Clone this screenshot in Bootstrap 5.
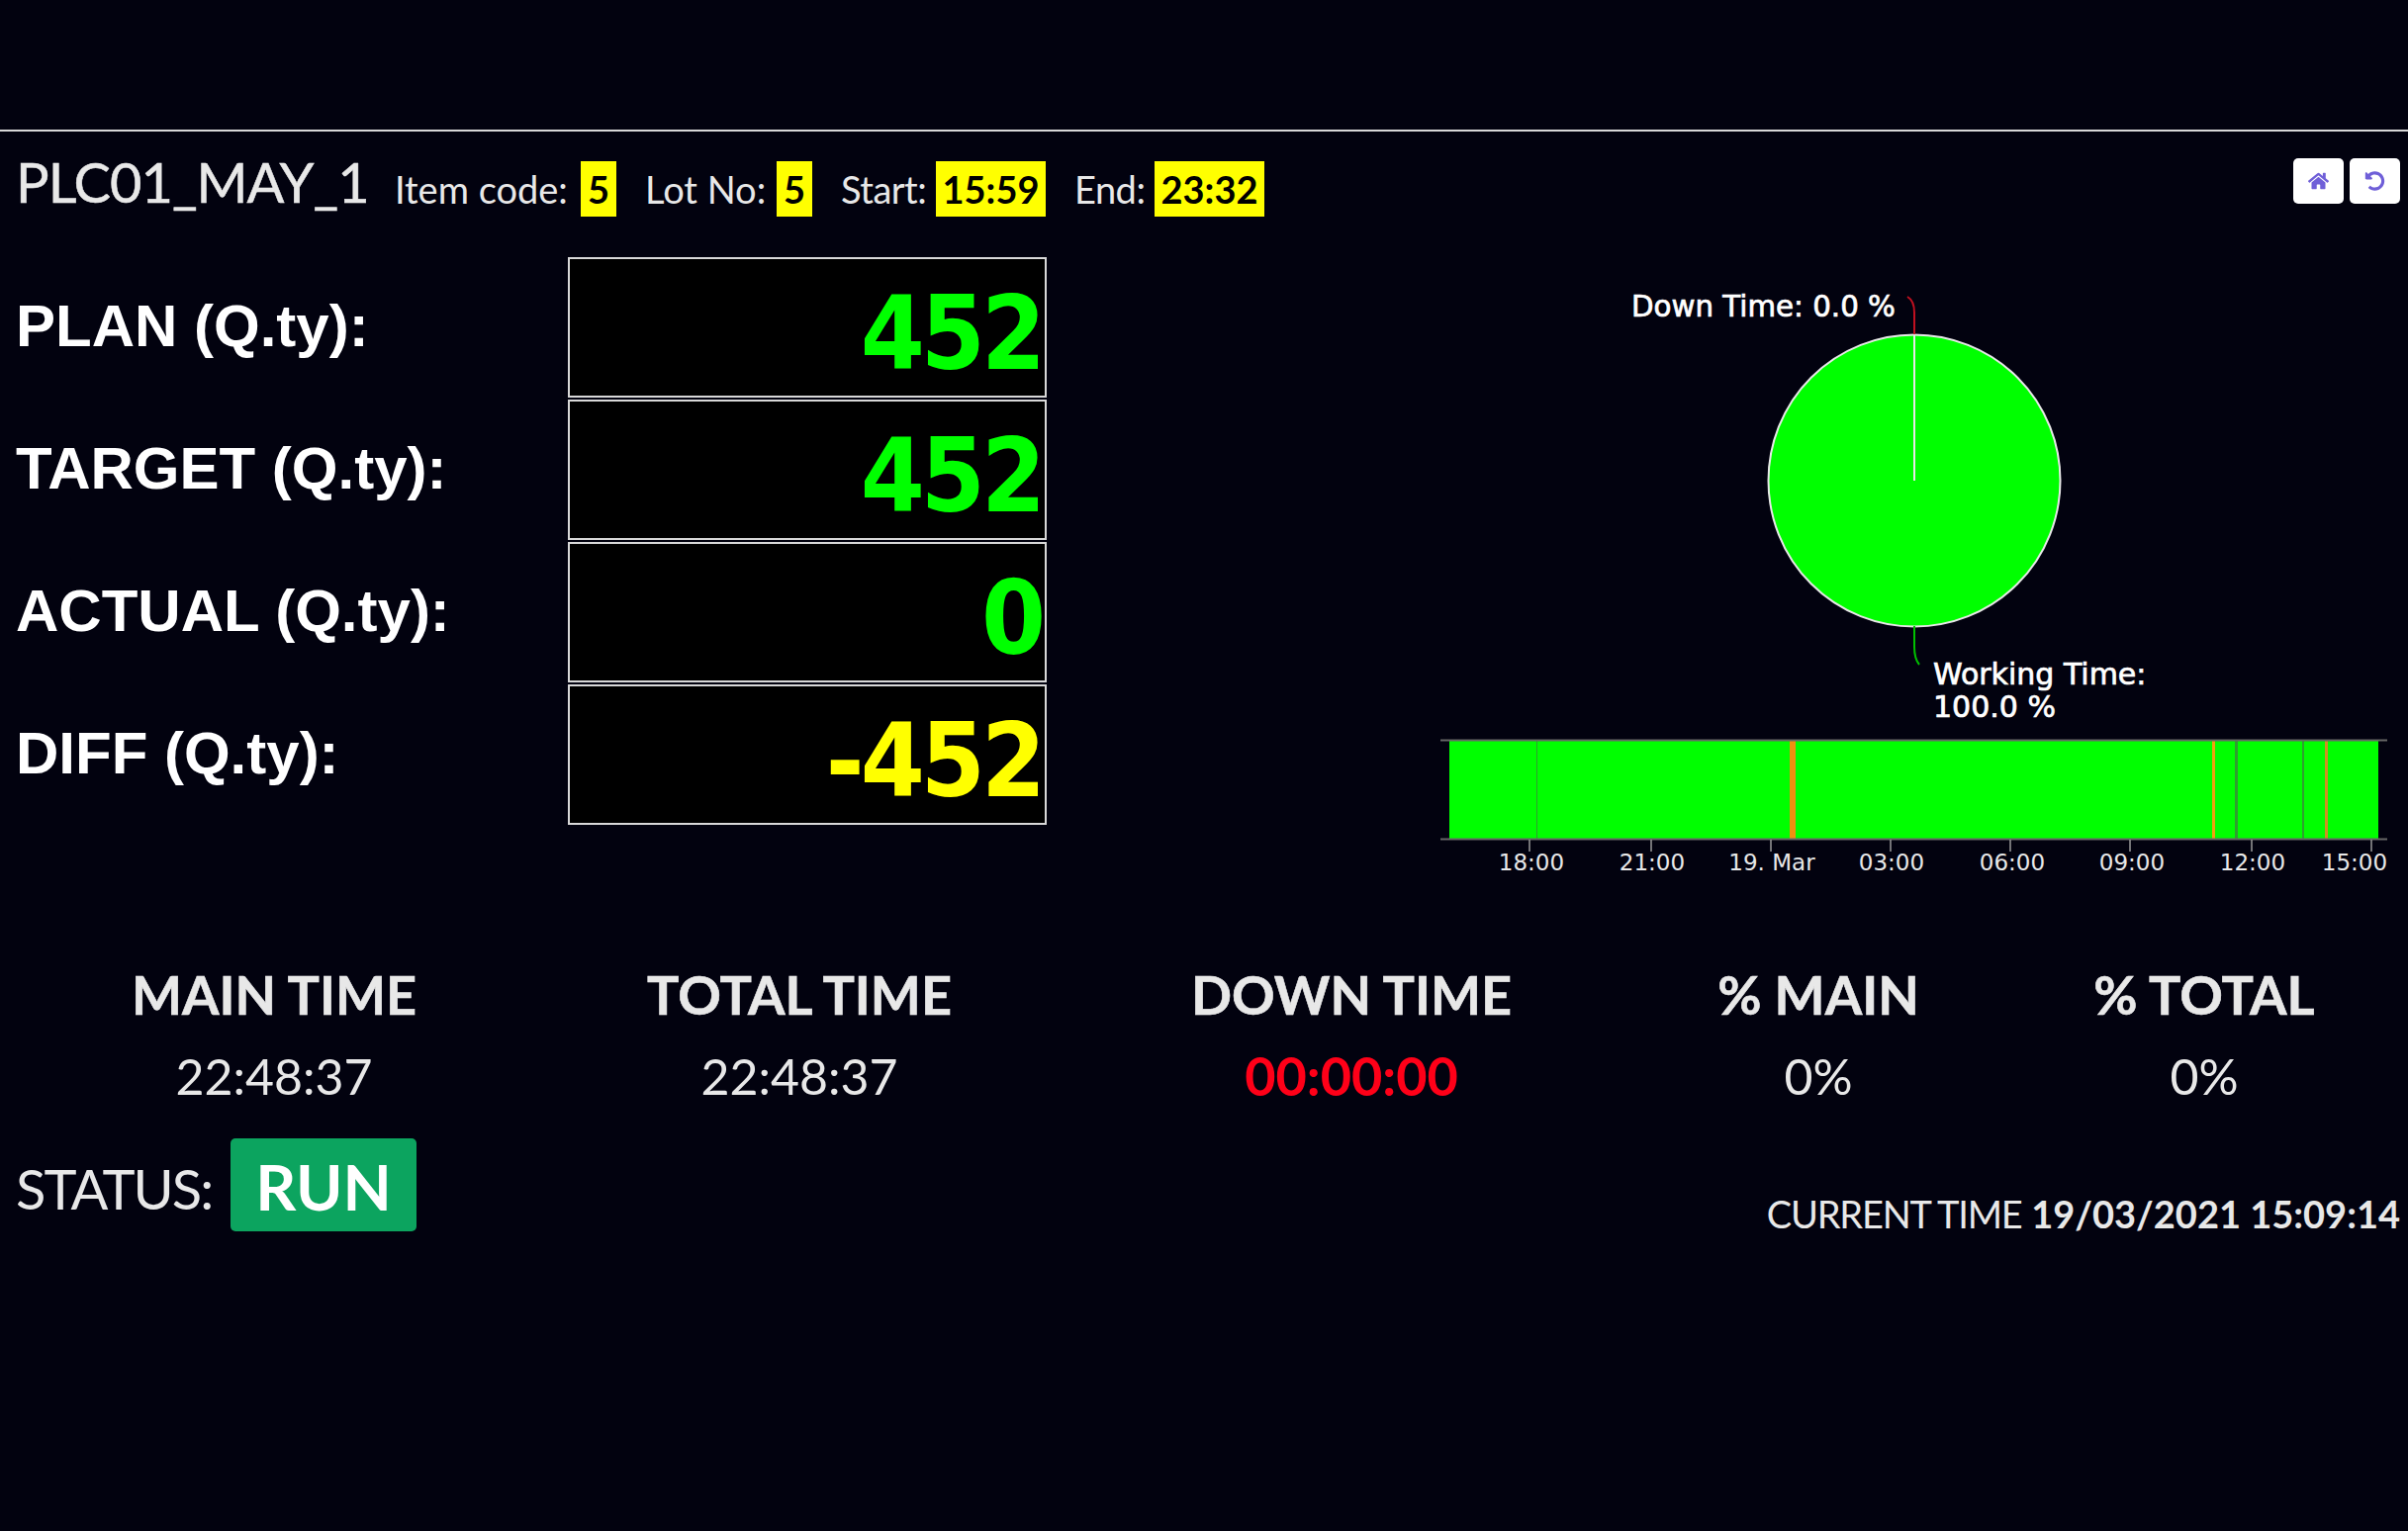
<!DOCTYPE html>
<html lang="en">
<head>
  <meta charset="UTF-8" />
  <title>PLC01_MAY_1</title>
  <link rel="stylesheet" href="https://cdn.jsdelivr.net/npm/bootstrap@5.3.0/dist/css/bootstrap.min.css">
  <style>
    body {
      background: #02020f;
      color: #e8e8e8;
      font-family: Lato, "Open Sans", sans-serif;
      width: 2434px;
      height: 1548px;
      overflow: hidden;
    }
    .top-gap { height: 133px; border-bottom: 2px solid #d8d8d8; }
    .head-row { height: 126px; padding: 30px 8px 0 16px; }
    .plc-title { font-size: 56px; line-height: 64px; width: 383px; margin-top: -11px; letter-spacing: -1px; -webkit-text-stroke: .5px #e8e8e8; }
    .head-item { font-size: 38px; line-height: 56px; margin-right: 29px; display: flex; }
    .chip { background: #ffff00; color: #000; font-weight: 700; height: 56px; text-align: center; }
    .chip-num { width: 36px; }
    .chip-time { width: 111px; }
    .lbl-item { width: 188px; }
    .lbl-lot { width: 133px; }
    .lbl-start { width: 96px; letter-spacing: -.5px; }
    .lbl-end { width: 81px; letter-spacing: -.5px; }
    .btn-wrap { gap: 6px; margin-top: -3px; }
    .home-btn { width: 51px; height: 46px; padding: 0; background: #fff; border: 0; border-radius: 5px; }
    .home-btn svg { width: 21px; height: 20px; fill: #6f5fd8; }
    .qty-col { width: 1058px; padding-left: 16px; }
    .qty-row { height: 144px; }
    .qty-label { width: 558px; font-family: "Liberation Sans", sans-serif; font-weight: 700; font-size: 60px; color: #fff; padding-bottom: 2px; }
    .qty-box {
      width: 484px; height: 142px; background: #000; border: 2px solid #d8d8d8;
      font-family: "DejaVu Sans", sans-serif; font-stretch: condensed; font-weight: 700; font-size: 104px;
      letter-spacing: -4px; text-align: right; padding-right: 3px; line-height: 150px;
    }
    .c-green { color: #00ff00; }
    .c-yellow { color: #ffff00; }
    .chart-svg { width: 1376px; height: 640px; display: block; margin-top: -3px; }
    .chart-svg text { font-family: "DejaVu Sans", sans-serif; fill: #fff; }
    .pie-label { font-size: 30px; stroke: #fff; stroke-width: .7px; }
    .pie-label-down { font-size: 29.3px; }
    .axis-label { font-size: 23px; fill: #e8e8e8 !important; }
    .stat-grid { display: grid; grid-template-columns: 554px 508px 608px 336px 428px; margin-top: 78px; text-align: center; }
    .stat-head { font-weight: 700; font-size: 54px; line-height: 64px; -webkit-text-stroke: .6px #e8e8e8; }
    .stat-val { font-size: 50px; line-height: 60px; margin-top: 20px; }
    .stat-down { color: #ff0018; font-weight: 700; font-size: 54px; }
    .status-row { padding: 0 8px 0 16px; margin-top: 33px; }
    .status-text { font-size: 56px; letter-spacing: -2px; width: 217px; padding-top: 8px; }
    .run-tag { width: 188px; height: 94px; background: #0ca45f; color: #fff; font-weight: 700; font-size: 64px; border-radius: 5px; padding-top: 3px; }
    .now-text { font-size: 38px; padding-bottom: 2px; margin-bottom: -13px; }
    .now-label { letter-spacing: -1.2px; }
  </style>
</head>
<body>
  <div class="top-gap"></div>

  <div class="head-row d-flex align-items-start">
    <div class="plc-title">PLC01_MAY_1</div>
    <div class="head-item"><span class="lbl-item">Item code:</span><span class="chip chip-num">5</span></div>
    <div class="head-item"><span class="lbl-lot">Lot No:</span><span class="chip chip-num">5</span></div>
    <div class="head-item"><span class="lbl-start">Start:</span><span class="chip chip-time">15:59</span></div>
    <div class="head-item"><span class="lbl-end">End:</span><span class="chip chip-time">23:32</span></div>
    <div class="btn-wrap ms-auto d-flex">
      <button class="home-btn d-flex align-items-center justify-content-center" aria-label="Home">
        <svg viewBox="0 0 576 512"><path d="M280.37 148.26L96 300.11V464a16 16 0 0 0 16 16l112.06-.29a16 16 0 0 0 15.92-16V368a16 16 0 0 1 16-16h64a16 16 0 0 1 16 16v95.64a16 16 0 0 0 16 16.05L464 480a16 16 0 0 0 16-16V300L295.67 148.26a12.19 12.19 0 0 0-15.3 0zM571.6 251.47L488 182.56V44.05a12 12 0 0 0-12-12h-56a12 12 0 0 0-12 12v72.61L318.47 43a48 48 0 0 0-61 0L4.34 251.47a12 12 0 0 0-1.6 16.9l25.5 31A12 12 0 0 0 45.15 301l235.22-193.74a12.19 12.19 0 0 1 15.3 0L530.9 301a12 12 0 0 0 16.9-1.6l25.5-31a12 12 0 0 0-1.7-16.93z"/></svg>
      </button>
      <button class="home-btn d-flex align-items-center justify-content-center" aria-label="Back">
        <svg viewBox="0 0 512 512"><path d="M255.545 8c-66.269.119-126.438 26.233-170.86 68.685L48.971 40.971C33.851 25.851 8 36.559 8 57.941V192c0 13.255 10.745 24 24 24h134.059c21.382 0 32.09-25.851 16.971-40.971l-41.75-41.75c30.864-28.899 70.801-44.907 113.23-45.273 92.398-.798 170.283 73.977 169.484 169.442C423.236 348.009 349.816 424 256 424c-41.127 0-79.997-14.678-110.63-41.556-4.743-4.161-11.906-3.908-16.368.553L89.34 422.659c-4.872 4.872-4.631 12.815.482 17.433C133.798 479.813 192.074 504 256 504c136.966 0 247.999-111.033 248-247.998C504.001 119.193 392.354 7.755 255.545 8z"/></svg>
      </button>
    </div>
  </div>

  <div class="d-flex">
    <div class="qty-col">
      <div class="qty-row d-flex align-items-center"><div class="qty-label">PLAN (Q.ty):</div><div class="qty-box c-green">452</div></div>
      <div class="qty-row d-flex align-items-center"><div class="qty-label">TARGET (Q.ty):</div><div class="qty-box c-green">452</div></div>
      <div class="qty-row d-flex align-items-center"><div class="qty-label">ACTUAL (Q.ty):</div><div class="qty-box c-green">0</div></div>
      <div class="qty-row d-flex align-items-center"><div class="qty-label">DIFF (Q.ty):</div><div class="qty-box c-yellow">-452</div></div>
    </div>

    <!-- x = page x - 1058, y = page y - 260 -->
    <svg class="chart-svg" viewBox="0 -4 1376 640">
      <circle cx="877" cy="226" r="147.5" fill="#00ff00" stroke="#e8e8e8" stroke-width="2"/>
      <path d="M877 78V226" stroke="#e8e8e8" stroke-width="2" fill="none"/>
      <path d="M877 78V56Q877 44 870 40" stroke="#c01020" stroke-width="2" fill="none"/>
      <path d="M877 373V394Q877 406 882 412" stroke="#00c000" stroke-width="2" fill="none"/>
      <text class="pie-label pie-label-down" x="591" y="60">Down Time: 0.0 %</text>
      <text class="pie-label" x="896" y="432">Working Time:</text>
      <text class="pie-label" x="896" y="465">100.0 %</text>

      <rect x="407" y="489" width="939" height="99" fill="#00ff00"/>
      <rect x="495" y="489" width="1" height="99" fill="#2f9f2f"/>
      <rect x="751" y="489" width="6" height="99" fill="#f09010"/>
      <rect x="1178" y="489" width="3" height="99" fill="#f0a010"/>
      <rect x="1201" y="489" width="3" height="99" fill="#2f9f2f"/>
      <rect x="1269" y="489" width="2" height="99" fill="#2f9f2f"/>
      <rect x="1292" y="489" width="3" height="99" fill="#d09020"/>
      <path d="M398 488.5H1355M398 588.5H1355" stroke="#666" stroke-width="2" fill="none"/>
      <path d="M488 589V601M611 589V601M732 589V601M853 589V601M974 589V601M1095 589V601M1218 589V601M1339 589V601" stroke="#999" stroke-width="1.5" fill="none"/>
      <g text-anchor="middle">
        <text class="axis-label" x="490" y="620">18:00</text>
        <text class="axis-label" x="612" y="620">21:00</text>
        <text class="axis-label" x="733" y="620">19. Mar</text>
        <text class="axis-label" x="854" y="620">03:00</text>
        <text class="axis-label" x="976" y="620">06:00</text>
        <text class="axis-label" x="1097" y="620">09:00</text>
        <text class="axis-label" x="1219" y="620">12:00</text>
        <text class="axis-label" x="1322" y="620">15:00</text>
      </g>
    </svg>
  </div>

  <div class="stat-grid">
    <div class="stat-head">MAIN TIME</div>
    <div class="stat-head">TOTAL TIME</div>
    <div class="stat-head">DOWN TIME</div>
    <div class="stat-head">% MAIN</div>
    <div class="stat-head ps-3">% TOTAL</div>
    <div class="stat-val">22:48:37</div>
    <div class="stat-val">22:48:37</div>
    <div class="stat-val stat-down">00:00:00</div>
    <div class="stat-val">0%</div>
    <div class="stat-val ps-3">0%</div>
  </div>

  <div class="status-row d-flex align-items-end justify-content-between">
    <div class="d-flex align-items-center">
      <span class="status-text">STATUS:</span>
      <span class="run-tag d-flex align-items-center justify-content-center">RUN</span>
    </div>
    <div class="now-text"><span class="now-label">CURRENT TIME</span> <b>19/03/2021 15:09:14</b></div>
  </div>

  <script src="https://cdn.jsdelivr.net/npm/bootstrap@5.3.0/dist/js/bootstrap.bundle.min.js"></script>
</body>
</html>
